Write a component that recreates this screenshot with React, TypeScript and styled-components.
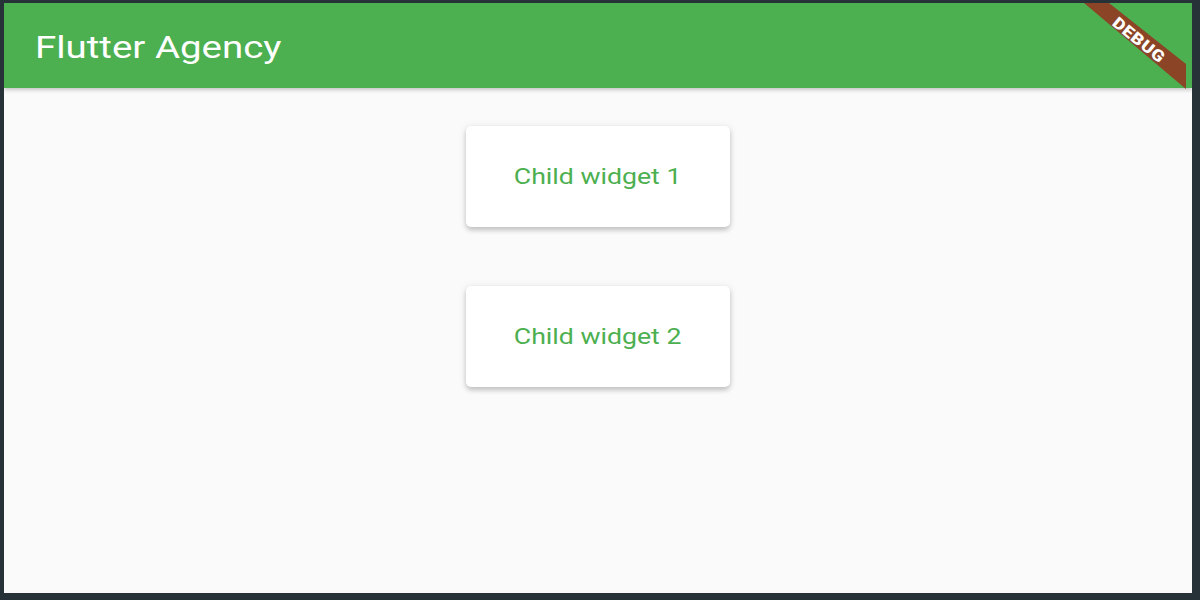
import styled, { createGlobalStyle } from 'styled-components';

const GlobalStyle = createGlobalStyle`
  html, body {
    margin: 0;
    padding: 0;
    background: #263238;
  }
  * {
    box-sizing: border-box;
  }
`;

const Frame = styled.div`
  width: 1200px;
  height: 600px;
  padding: 3px 8px 7px 4px;
  background: #263238;
`;

const Screen = styled.div`
  position: relative;
  width: 100%;
  height: 100%;
  display: flex;
  flex-direction: column;
  background: #fafafa;
  overflow: hidden;
`;

const AppBar = styled.header`
  position: relative;
  z-index: 1;
  height: 85px;
  flex-shrink: 0;
  display: flex;
  align-items: center;
  padding-left: 31px;
  background: #4caf50;
  box-shadow: 0 2px 4px rgba(0, 0, 0, 0.22);
`;

const Title = styled.h1`
  margin: 0;
  padding-top: 3px;
  font-family: Roboto, 'Noto Sans', sans-serif;
  font-weight: 400;
  font-size: 31px;
  color: #ffffff;
  transform: scaleX(1.24);
  transform-origin: left center;
`;

const Body = styled.main`
  flex: 1;
  display: flex;
  flex-direction: column;
  align-items: center;
  gap: 59px;
  padding-top: 38px;
`;

const Card = styled.div`
  width: 264px;
  height: 101px;
  display: flex;
  align-items: center;
  justify-content: center;
  background: #ffffff;
  border-radius: 5px;
  box-shadow: 0 3px 5px rgba(0, 0, 0, 0.2), 0 1px 8px rgba(0, 0, 0, 0.08);
`;

const CardLabel = styled.span`
  font-family: Roboto, 'Noto Sans', sans-serif;
  font-size: 21.5px;
  color: #4caf50;
  transform: scaleX(1.24);
`;

const Banner = styled.svg`
  position: absolute;
  top: 0;
  right: 0;
  z-index: 2;
  pointer-events: none;
`;

const DebugBanner = () => (
  <Banner width="110" height="90" viewBox="0 0 110 90">
    <polygon points="2,0 27,0 104,61 104,86" fill="#8b4526" />
    <text
      x="0"
      y="0"
      transform="translate(57 37) rotate(39) scale(1.15 1)"
      textAnchor="middle"
      dominantBaseline="central"
      fill="#ffffff"
      fontFamily="Roboto, 'Noto Sans', sans-serif"
      fontWeight="900"
      fontSize="16"
      letterSpacing="0.6"
    >
      DEBUG
    </text>
  </Banner>
);

export default function App() {
  return (
    <>
      <GlobalStyle />
      <Frame>
        <Screen>
          <AppBar>
            <Title>Flutter Agency</Title>
          </AppBar>
          <Body>
            <Card>
              <CardLabel>Child widget 1</CardLabel>
            </Card>
            <Card>
              <CardLabel>Child widget 2</CardLabel>
            </Card>
          </Body>
          <DebugBanner />
        </Screen>
      </Frame>
    </>
  );
}
